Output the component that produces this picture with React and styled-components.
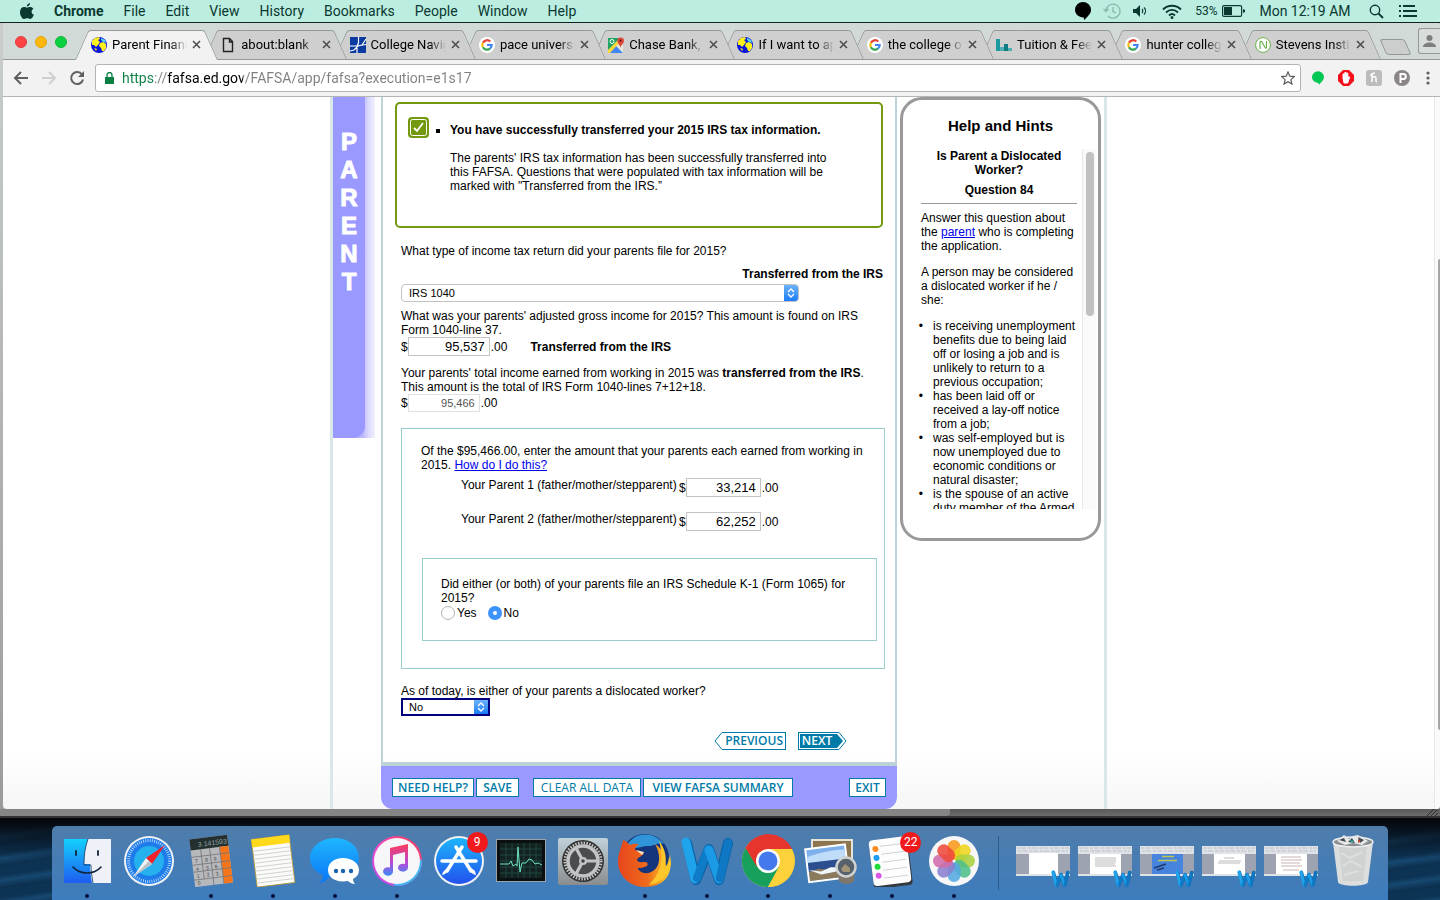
import React from "react";
import styled, { createGlobalStyle, css } from "styled-components";

const ui = `Roboto, "Liberation Sans", sans-serif`;
const body = `"Liberation Sans", Arial, sans-serif`;
const humanist = `"Open Sans", "Noto Sans", sans-serif`;
const teal = "#007ba7";
const lilac = "#9999ff";

const GlobalStyle = createGlobalStyle`
  *, *::before, *::after { box-sizing: border-box; }
  body { margin: 0; background: #0a1c30; font-family: ${body}; font-size: 12px; line-height: 14px; color: #000; }
  p, h1, h2, h3, ul { margin: 0; padding: 0; font-size: inherit; }
  button, input, select { font: inherit; color: inherit; margin: 0; }
  button { padding: 0; border: 0; background: none; }
  svg { display: block; flex: none; }
  a { color: #0000ee; }
`;

const Desktop = styled.div`
  display: flex;
  flex-direction: column;
  min-height: 100vh;
  background: linear-gradient(#060a10 0 822px, transparent 860px),
    repeating-linear-gradient(172deg, #0d3354 0 9px, #164870 14px, #0c2d4b 22px);
`;

/* ---------- system menu bar ---------- */
const MenuBar = styled.header`
  display: flex;
  align-items: center;
  height: 23px;
  padding: 0 16px 0 20px;
  background: #bbede1;
  border-bottom: 1px solid #14231f;
  font-family: ${ui};
  font-size: 14px;
  color: #0b382f;
`;
const Menus = styled.nav`
  display: flex;
  align-items: center;
  gap: 20px;
  margin-right: auto;
`;
const MenuItem = styled.button`
  font-weight: ${(p) => (p.$strong ? 700 : 400)};
  line-height: 22px;
`;
const StatusItem = styled.div`
  display: flex;
  align-items: center;
  justify-content: center;
  gap: 4px;
  width: ${(p) => p.$w}px;
  font-size: ${(p) => (p.$small ? 12 : 14)}px;
  white-space: nowrap;
`;

/* ---------- browser window ---------- */
const BackWindow = styled.div`
  display: flex;
  flex-direction: column;
  flex: 1;
  padding-left: 3px;
  background: linear-gradient(#c9cecd, #9a9a9a);
  margin-bottom: 8px;
`;
const Browser = styled.section`
  display: flex;
  flex-direction: column;
  flex: 1;
  border-radius: 5px 5px 4px 4px;
  overflow: hidden;
  background: #fff;
`;
const TabStrip = styled.div`
  display: flex;
  align-items: flex-end;
  height: 37px;
  background: #d2dad7;
  border-bottom: 1px solid #949896;
`;
const Lights = styled.div`
  display: flex;
  gap: 8px;
  width: 72px;
  flex: none;
  padding: 0 0 11px 12px;
`;
const Light = styled.button`
  width: 12px;
  height: 12px;
  border-radius: 50%;
  background: ${(p) => p.$c};
  border: 1px solid ${(p) => p.$edge};
`;
const Tabs = styled.div`
  display: flex;
  flex: 1;
  min-width: 0;
`;
const edge = css`
  content: "";
  position: absolute;
  z-index: -1;
  top: 0;
  bottom: ${(p) => (p.$active ? -1 : 0)}px;
  background: ${(p) => (p.$active ? "#f2f2f2" : "#cfcfcf")};
  border-top: 1px solid #949896;
  transform-origin: bottom;
`;
const Tab = styled.div`
  position: relative;
  z-index: ${(p) => p.$z};
  isolation: isolate;
  display: flex;
  align-items: center;
  gap: 5px;
  flex: 1 1 0;
  min-width: 0;
  height: 29px;
  padding: 0 3px 0 16px;
  font-family: ${ui};
  font-size: 13px;
  line-height: 16px;
  &::before {
    ${edge}
    left: 0;
    right: 40%;
    border-left: 1px solid #949896;
    border-top-left-radius: 3px;
    transform: skewX(-24deg);
  }
  &::after {
    ${edge}
    left: 40%;
    right: -13px;
    border-right: 1px solid #949896;
    border-top-right-radius: 3px;
    transform: skewX(24deg);
  }
`;
const TabTitle = styled.span`
  flex: 1;
  overflow: hidden;
  white-space: nowrap;
  mask-image: linear-gradient(90deg, #000 78%, transparent);
`;
const NewTab = styled.button`
  width: 25px;
  height: 16px;
  flex: none;
  margin: 0 0 4px 15px;
  border: 1px solid #949896;
  border-radius: 3px;
  background: #cbcecd;
  transform: skewX(24deg);
`;
const Person = styled.button`
  display: flex;
  justify-content: flex-end;
  align-items: center;
  width: 22px;
  height: 26px;
  flex: none;
  margin: 0 0 5px 10px;
  padding-right: 4px;
  border: 1px solid #949896;
  border-right: 0;
  border-radius: 3px 0 0 3px;
  background: #d8dddb;
`;
const Toolbar = styled.div`
  display: flex;
  align-items: center;
  height: 37px;
  padding-left: 4px;
  background: #f2f2f2;
  border-bottom: 1px solid #b5b5b5;
`;
const ToolButton = styled.button`
  display: flex;
  align-items: center;
  justify-content: center;
  width: ${(p) => (p.$last ? 24 : 28)}px;
  height: 28px;
  flex: none;
`;
const Omnibox = styled.label`
  display: flex;
  align-items: center;
  gap: 8px;
  flex: 1;
  height: 28px;
  margin: 0 3px 0 4px;
  padding: 0 5px 0 9px;
  background: #fff;
  border: 1px solid #b4b4b4;
  border-radius: 3px;
`;
const UrlInput = styled.input`
  flex: 1;
  min-width: 0;
  padding: 0;
  border: 0;
  outline: 0;
  font-family: ${ui};
  font-size: 14px;
  line-height: 20px;
  -webkit-text-fill-color: transparent;
  background: linear-gradient(90deg, #0b8043 0 32px, #808080 32px 45px, #000 45px 121px, #808080 121px);
  background-clip: text;
`;

/* ---------- page ---------- */
const Viewport = styled.div`
  display: flex;
  flex: 1;
  background: linear-gradient(transparent 92%, rgba(0, 0, 0, 0.035));
`;
const PageScroll = styled.div`
  width: 6px;
  flex: none;
  padding: 162px 0 79px 3px;
  background: #fafafa;
  border-left: 1px solid #e7e7e7;
  display: flex;
`;
const PageThumb = styled.div`
  flex: 1;
  border-radius: 3px 0 0 3px;
  background: #a6a6a6;
`;
const Frame = styled.main`
  display: flex;
  width: 777px;
  margin: 0 auto;
  border: 3px solid #d9e7e9;
  border-width: 0 3px;
`;
const StepRail = styled.aside`
  display: flex;
  width: 42px;
  height: 341px;
  flex: none;
  margin-right: 6px;
  background: linear-gradient(90deg, #b9b7fb 70%, #dcdbff 85%, #f1f0ff);
`;
const StepName = styled.h2`
  display: flex;
  flex-direction: column;
  align-items: center;
  width: 32px;
  padding-top: 31px;
  background: ${lilac};
  border-bottom-right-radius: 12px;
  font-size: 24px;
  line-height: 28px;
  font-weight: 700;
  color: #fff;
  -webkit-text-stroke: 1px #fff;
`;
const Center = styled.div`
  display: flex;
  flex-direction: column;
  width: 516px;
  flex: none;
`;
const Form = styled.form`
  flex: 1;
  display: flex;
  flex-direction: column;
  padding: 5px 12px 12px;
  border: 2px solid #bcd3d7;
  border-top: 0;
  border-bottom-width: 4px;
`;
const Notice = styled.section`
  display: flex;
  height: 126px;
  padding: 13px 40px 0 11px;
  border: 2px solid #72990f;
  border-radius: 5px;
`;
const NoticeList = styled.ul`
  flex: 1;
  padding: 6px 0 0 21px;
  list-style: square;
`;
const NoticeText = styled.p`
  margin-top: 14px;
`;
const Questions = styled.div`
  display: flex;
  flex-direction: column;
  flex: 1;
  padding: 16px 0 0 6px;
`;
const Question = styled.p`
  margin-top: ${(p) => p.$gap || 0}px;
`;
const RightNote = styled.strong`
  align-self: flex-end;
  margin: 9px 0 3px;
`;
const SelectBox = styled.div`
  display: flex;
  width: ${(p) => p.$w}px;
  height: 18px;
  background: #fff;
  border: ${(p) => (p.$focused ? "2px solid #00007f" : "1px solid #c3c3c3")};
  border-radius: ${(p) => (p.$focused ? 0 : 4)}px;
  overflow: hidden;
`;
const Select = styled.select`
  flex: 1;
  min-width: 0;
  padding: 0 0 0 ${(p) => p.$pad}px;
  border: 0;
  outline: 0;
  appearance: none;
  background: none;
  font-size: 11px;
  line-height: 14px;
`;
const Stepper = styled.span`
  display: flex;
  align-items: center;
  justify-content: center;
  width: 14px;
  background: linear-gradient(#6cb3fa, #1a7cf9);
`;
const Money = styled.div`
  display: flex;
  align-items: center;
  height: ${(p) => (p.$quiet ? 18 : 19)}px;
`;
const Amount = styled.input`
  width: ${(p) => p.$w}px;
  height: ${(p) => (p.$quiet ? 18 : 19)}px;
  margin-right: 1px;
  padding: 0 4px 0 0;
  border: 1px solid ${(p) => (p.$quiet ? "#e0e0e0" : "#c4c4c4")};
  background: #fff;
  text-align: right;
  font-size: ${(p) => (p.$quiet ? 11 : 13)}px;
  color: ${(p) => (p.$quiet ? "#545454" : "#000")};
  outline: 0;
`;
const MoneyNote = styled.strong`
  margin-left: 23px;
`;
const Panel = styled.section`
  margin: 16px -2px 0 0;
  padding: 15px 7px 27px 19px;
  border: 1px solid #99cccc;
`;
const ParentRow = styled.label`
  display: flex;
  align-items: center;
  height: 19px;
  margin: ${(p) => (p.$first ? 6 : 15)}px 0 0 40px;
`;
const ParentName = styled.span`
  align-self: flex-start;
  width: 218px;
`;
const SubPanel = styled.fieldset`
  height: 83px;
  margin: 27px 0 0 1px;
  padding: 18px 24px 0 18px;
  border: 1px solid #99cccc;
`;
const Radios = styled.div`
  display: flex;
  align-items: center;
  gap: 11px;
  height: 16px;
`;
const RadioLabel = styled.label`
  display: flex;
  align-items: center;
  gap: 2px;
`;
const Radio = styled.input`
  appearance: none;
  width: 14px;
  height: 14px;
  border-radius: 50%;
  border: 1px solid #b4b4b4;
  background: #fff;
  &:checked {
    border: 5px solid #3b93fb;
  }
`;
const Steps = styled.div`
  display: flex;
  justify-content: flex-end;
  gap: 12px;
  margin: 16px 36px 0 0;
`;
const ArrowButton = styled.button`
  display: flex;
  height: 18px;
  font-family: ${humanist};
  font-size: 12px;
  line-height: 16px;
  font-weight: 600;
  color: ${teal};
`;
const PreviousText = styled.span`
  padding: 0 2px;
  border: 1px solid ${teal};
  border-left: 0;
`;
const NextText = styled.span`
  width: 36px;
  height: 18px;
  padding: 1px 0 1px 1px;
  border: 1px solid ${teal};
  border-right: 0;
  background: ${teal} content-box;
  color: #fff;
  line-height: 14px;
`;
const Actions = styled.footer`
  display: flex;
  align-items: center;
  gap: 2px;
  height: 43px;
  padding: 0 11px;
  background: ${lilac};
  border-radius: 0 0 12px 12px;
`;
const Action = styled.button`
  width: ${(p) => p.$w}px;
  height: 19px;
  border: 1px solid ${teal};
  background: #fff;
  font-family: ${humanist};
  font-size: 12px;
  line-height: 17px;
  font-weight: ${(p) => (p.$light ? 400 : 600)};
  white-space: nowrap;
  color: ${teal};
  margin-left: ${(p) => (p.$push ? "auto" : p.$apart ? "12px" : 0)};
`;

/* ---------- help ---------- */
const Help = styled.aside`
  display: flex;
  flex-direction: column;
  width: 201px;
  height: 444px;
  margin-left: 3px;
  padding-top: 16px;
  border: 3px solid #999;
  border-radius: 22px;
`;
const HelpTitle = styled.h2`
  font-size: 15px;
  line-height: 20px;
  text-align: center;
`;
const HelpScroll = styled.div`
  display: flex;
  justify-content: space-between;
  height: 360px;
  margin: 13px 1px 0 0;
  overflow: hidden;
`;
const HelpText = styled.div`
  width: 174px;
  padding-left: 18px;
`;
const HelpHead = styled.h3`
  margin-bottom: 6px;
  text-align: center;
`;
const Rule = styled.hr`
  height: 1px;
  margin: 0 0 7px;
  border: 0;
  background: #999;
`;
const HelpPara = styled.p`
  margin-bottom: 12px;
`;
const HelpList = styled.ul`
  padding-left: 12px;
  li::marker {
    content: "•   ";
  }
`;
const HelpTrack = styled.div`
  width: 15px;
  padding: 3px;
  background: #fafafa;
  border-left: 1px solid #e8e8e8;
`;
const HelpThumb = styled.div`
  width: 8px;
  height: 164px;
  border-radius: 4px;
  background: #c1c1c1;
`;

/* ---------- window bottom edge ---------- */
const Ledge = styled.div`
  display: flex;
  height: 9px;
  margin-left: -3px;
  background: linear-gradient(#5a5a5a, #6c6c6c 7px, #333 7px);
`;
const LedgeFront = styled.div`
  width: 66%;
  height: 7px;
  margin-right: auto;
  background: #858585;
  border-bottom-right-radius: 4px;
`;

/* ---------- dock ---------- */
const Dock = styled.nav`
  display: flex;
  height: 74px;
  margin: 0 52px;
  padding: 0 4px;
  border-radius: 5px 5px 0 0;
  background: linear-gradient(#4f7dab, #3d7cbd);
`;
const DockItem = styled.button`
  position: relative;
  display: flex;
  flex-direction: column;
  align-items: center;
  flex: 1 1 0;
  min-width: 0;
  padding-top: 7px;
`;
const Running = styled.i`
  width: 4px;
  height: 4px;
  margin-top: 7px;
  border-radius: 50%;
  background: #07103a;
`;
const Badge = styled.span`
  position: absolute;
  top: 6px;
  right: 2px;
  width: 21px;
  height: 21px;
  border-radius: 50%;
  background: #f0191c;
  color: #fff;
  font-family: ${ui};
  font-size: 12px;
  line-height: 21px;
  text-align: center;
`;
const Divider = styled.i`
  width: 1px;
  margin: 10px 13px;
  background: #2a5c90;
`;

/* ---------- small drawings ---------- */
const Globe = () => (
  <svg width="16" height="16" viewBox="0 0 16 16">
    <circle cx="8" cy="8" r="8" fill="#0a14d8" />
    <path d="M1 4l3-3 4-1 1 2-2 1 2 2-2 3-2 2-2-2H1zM9 6l3-1 3 2v4l-2 3h-2l-1-3-2-2zM3 11l3 1-1 2z" fill="#fff21a" />
    <path d="M10 1l4 2 1 3-3-1-2-2z" fill="#55d4e8" />
  </svg>
);
const Blank = () => (
  <svg width="16" height="16" viewBox="0 0 16 16">
    <path d="M3.500 1.500h6l3 3v10h-9zM9.500 1.500v3.500h3" fill="none" stroke="#222" strokeWidth="1.400" />
  </svg>
);
const Navigator = () => (
  <svg width="16" height="16" viewBox="0 0 16 16">
    <path d="M0 0h16v16H0z" fill="#0b3aa0" />
    <path d="M8.500 0v6L7 9v7M0 9h7l9-1.500M0 14l4-1 4-4 4-1 4-6" fill="none" stroke="#fff" strokeWidth="1.200" />
  </svg>
);
const Google = () => (
  <svg width="16" height="16" viewBox="0 0 16 16">
    <circle cx="8" cy="8" r="8" fill="#fff" />
    <g fill="none" strokeWidth="2.200">
      <path d="M11.300 4.500A4.700 4.700 0 0 0 3.900 5.800" stroke="#ea4335" />
      <path d="M3.900 5.700A4.700 4.700 0 0 0 3.900 10.300" stroke="#fbbc05" />
      <path d="M3.900 10.200A4.700 4.700 0 0 0 11 11.600" stroke="#34a853" />
      <path d="M11 11.600A4.700 4.700 0 0 0 12.700 8H8" stroke="#4285f4" />
    </g>
  </svg>
);
const Maps = () => (
  <svg width="16" height="16" viewBox="0 0 16 16">
    <path d="M0 1h12L0 14z" fill="#1fa463" />
    <path d="M0 14L11 3l4 4v9H1z" fill="#e9e6dc" />
    <path d="M1 16l7-7 7 7z" fill="#4285f4" />
    <path d="M0 13l11-11 2 2L2 16H0z" fill="#fdd73c" />
    <circle cx="4" cy="4.500" r="2" fill="none" stroke="#fff" />
    <path d="M12.500 11c0-3-3.200-4-3.200-7.200a3.300 3.300 0 0 1 6.700 0c0 3.200-3.200 4.200-3.500 7.200z" fill="#dd4b3e" />
    <circle cx="12.600" cy="3.800" r="1.200" fill="#7d1c14" />
  </svg>
);
const Bars = () => (
  <svg width="16" height="16" viewBox="0 0 16 16">
    <path d="M0 2h4v12H0z" fill="#1b9aa0" />
    <path d="M4 10h4v4H4zM12 11h4v3h-4z" fill="#4fb0b4" />
    <path d="M8 7h4v7H8z" fill="#0c7c80" />
  </svg>
);
const Neighbour = () => (
  <svg width="16" height="16" viewBox="0 0 16 16">
    <circle cx="8" cy="8" r="7.400" fill="#fff" stroke="#6ab04a" />
    <path d="M5 12V5.500C5 4 6.300 4 7 5l3 5.500c.6 1 1.500.8 1.500-.5V4" fill="none" stroke="#6ab04a" strokeWidth="1.200" />
  </svg>
);
const Close = () => (
  <svg width="9" height="9" viewBox="0 0 9 9">
    <path d="M1 1l7 7M8 1L1 8" stroke="#4a4a4a" strokeWidth="1.500" />
  </svg>
);
const Blob = ({ c, s }) => (
  <svg width={s} height={s + 2} viewBox="0 0 16 18">
    <path d="M8 0a8 7.800 0 0 1 8 7.800c0 4-3 6-6.500 10.200l-1-2.500C3.500 15.500 0 12 0 7.800A8 7.800 0 0 1 8 0z" fill={c} />
  </svg>
);
const Arrow = ({ flip, c }) => (
  <svg width="16" height="16" viewBox="0 0 16 16">
    <path d={flip ? "M1 8h13M8 2l6 6-6 6" : "M15 8H2M8 2L2 8l6 6"} fill="none" stroke={c} strokeWidth="2" />
  </svg>
);
const Chevrons = () => (
  <svg width="8" height="10" viewBox="0 0 8 10">
    <path d="M1 4l3-3 3 3M1 6l3 3 3-3" fill="none" stroke="#fff" strokeWidth="1.300" />
  </svg>
);
const Drawing = ({ children, w = 54 }) => (
  <svg width={w} height="54" viewBox="0 0 54 54">
    {children}
  </svg>
);

const Finder = () => (
  <Drawing>
    <defs>
      <linearGradient id="fa" x2="0" y2="1"><stop stopColor="#14d0fe" /><stop offset="1" stopColor="#1d5ef0" /></linearGradient>
    </defs>
    <path d="M4 6h47v44H4z" fill="#eef2f8" />
    <path d="M4 6h24c-3 8-4 16-4 25h6c0 7 1 13 2 19H4z" fill="url(#fa)" />
    <path d="M28 6c-3 8-4 16-4 26h7c0 6 1 12 2 18" fill="none" stroke="#12335c" strokeWidth=".8" />
    <path d="M16 18v4M38 18v4" stroke="#12233a" strokeWidth="1.800" strokeLinecap="round" />
    <path d="M13 34c7 8 21 8 28 0" fill="none" stroke="#12233a" strokeWidth="1.600" strokeLinecap="round" />
  </Drawing>
);
const Safari = () => (
  <Drawing>
    <circle cx="27" cy="28" r="25" fill="#f1f3f5" />
    <circle cx="27" cy="28" r="23" fill="#1e7bea" />
    <circle cx="27" cy="28" r="15" fill="#25b1ee" />
    <circle cx="27" cy="28" r="20.500" fill="none" stroke="#d8ecff" strokeWidth="3" strokeDasharray=".7 1.500" />
    <path d="M43 12L30 31l-6-6z" fill="#f2222a" />
    <path d="M11 44l13-19 6 6z" fill="#f3f3f3" />
    <path d="M11 44l19-13-3-3z" fill="#b9bfc6" />
  </Drawing>
);
const Calculator = () => (
  <Drawing>
    <g transform="rotate(-7 27 27)">
      <path d="M8 4h38v48H8z" fill="#b6b8bb" />
      <path d="M8 4h38v11H8z" fill="#24302f" />
      <path d="M37 15h9v37h-9z" fill="#f5761a" />
      <path d="M8 22h38M8 30h38M8 37h38M8 45h38M18 15v30M27 15v37M37 15v37" stroke="#74767a" strokeWidth=".8" />
      <text x="45" y="12.500" textAnchor="end" fontFamily="Liberation Sans" fontSize="7" fill="#93a5a4">3.141593</text>
      <g fontFamily="Liberation Sans" fontSize="5" fill="#444">
        <text x="11" y="28">7</text><text x="21" y="28">8</text><text x="30" y="28">9</text>
        <text x="11" y="36">4</text><text x="21" y="36">5</text><text x="30" y="36">6</text>
        <text x="11" y="43">1</text><text x="21" y="43">2</text><text x="30" y="43">3</text>
        <text x="11" y="50">0</text>
      </g>
    </g>
  </Drawing>
);
const Notes = () => (
  <Drawing>
    <g transform="rotate(-7 27 27)">
      <path d="M8 4h38v48H8z" fill="#fbfbf9" stroke="#b8962c" strokeWidth=".8" />
      <path d="M8 4h38v8H8z" fill="#ffd91c" />
      <path d="M8 16h38M8 20h38M8 24h38M8 28h38M8 32h38M8 36h38M8 40h38M8 44h38M8 48h38" stroke="#c9c9c9" strokeWidth=".8" />
    </g>
  </Drawing>
);
const Messages = () => (
  <Drawing>
    <defs>
      <linearGradient id="ms" x2="0" y2="1"><stop stopColor="#1fb6ff" /><stop offset="1" stopColor="#0a76f5" /></linearGradient>
    </defs>
    <path d="M27 5c14 0 24 9 24 20S41 45 27 45c-2 0-4 0-6-1-3 4-7 6-10 6 3-3 4-5 4-8C7 39 2 33 2 25 2 14 13 5 27 5z" fill="url(#ms)" />
    <path d="M35 25c9 0 16 5 16 12 0 4-2 7-6 9 0 2 1 4 2 5-3 0-5-1-7-3-12 2-20-3-20-11 0-7 6-12 15-12z" fill="#fff" />
    <g fill="#1a62ae"><circle cx="28" cy="38" r="2.200" /><circle cx="35" cy="38" r="2.200" /><circle cx="43" cy="38" r="2.200" /></g>
  </Drawing>
);
const Music = () => (
  <Drawing>
    <defs>
      <linearGradient id="it" x1="1" x2="0" y2="1"><stop stopColor="#fb3a4a" /><stop offset=".6" stopColor="#f04ad0" /><stop offset="1" stopColor="#b04af0" /></linearGradient>
      <linearGradient id="nt" x2="0" y2="1"><stop stopColor="#fb3b57" /><stop offset=".6" stopColor="#b54bd8" /><stop offset="1" stopColor="#3b8cf6" /></linearGradient>
    </defs>
    <circle cx="27" cy="28" r="25" fill="url(#it)" />
    <path d="M52 28A25 25 0 0 1 27 53l-4-1 27-26z" fill="#3fb8f4" />
    <circle cx="27" cy="28" r="23" fill="#f7f7fa" />
    <path d="M20 15l18-4v24a5 4 0 1 1-3-4V19l-12 3v17a5 4.300 0 1 1-3-4.500z" fill="url(#nt)" />
  </Drawing>
);
const Store = () => (
  <Drawing>
    <defs>
      <linearGradient id="st" x2="0" y2="1"><stop stopColor="#1cb4fb" /><stop offset="1" stopColor="#2352ee" /></linearGradient>
    </defs>
    <circle cx="27" cy="28" r="25" fill="#f1f3f5" />
    <circle cx="27" cy="28" r="23" fill="url(#st)" />
    <g stroke="#fff" strokeWidth="3.500" strokeLinecap="round">
      <path d="M10 28h34" /><path d="M30 14L15 38" /><path d="M24 14l15 24" />
    </g>
    <path d="M16 34l-5 5-1 3 3-1 5-5zM38 34l5 4 1 4-3-1-5-5z" fill="#fff" />
  </Drawing>
);
const Activity = () => (
  <Drawing>
    <path d="M2 6h50v43H2z" fill="#9aa3a8" />
    <path d="M3 7h48v41H3z" fill="#0b0f10" />
    <path d="M6 10h42v35H6z" fill="#122322" />
    <path d="M12 10v35M18 10v35M24 10v35M30 10v35M36 10v35M42 10v35M6 16h42M6 22h42M6 28h42M6 34h42M6 40h42" stroke="#27534c" strokeWidth=".7" />
    <path d="M6 31h9l2-3 2 5 3-2 1 2 1-19 2 25 2-9h4l3-4 3 1 3 4 3-1 4 2" fill="none" stroke="#6fe3c4" />
  </Drawing>
);
const Settings = () => (
  <Drawing>
    <defs>
      <linearGradient id="sp" x2="0" y2="1"><stop stopColor="#bfd1da" /><stop offset="1" stopColor="#8a8d8e" /></linearGradient>
    </defs>
    <rect x="2" y="5" width="50" height="47" rx="2" fill="url(#sp)" />
    <circle cx="27" cy="28" r="21" fill="#333" />
    <circle cx="27" cy="28" r="18" fill="none" stroke="#c2c4c5" strokeWidth="3" strokeDasharray="1.500 1.330" />
    <circle cx="27" cy="28" r="15" fill="#4a4c4d" stroke="#c2c4c5" strokeWidth="3.500" />
    <path d="M27 28h15M27 28L20 15M27 28l-7 13" stroke="#c2c4c5" strokeWidth="3.200" />
    <circle cx="27" cy="28" r="4" fill="#c2c4c5" /><circle cx="27" cy="28" r="1.800" fill="#444" />
  </Drawing>
);
const Firefox = () => (
  <Drawing>
    <defs>
      <linearGradient id="ff" x2="1"><stop stopColor="#e8451c" /><stop offset=".55" stopColor="#ee6a1a" /><stop offset="1" stopColor="#fdd22c" /></linearGradient>
    </defs>
    <circle cx="27" cy="25" r="24" fill="#14357c" />
    <path d="M8 13C17-2 36-2 46 11c-6-3-10 3-18 2-6 1-12 4-20 0z" fill="#2f95d8" />
    <path d="M5 7c3 1 5 3 7 5 4-2 7-1 9-1-3 2-4 4-4 6l9 3c-2 4-7 4-7 7 1 3 5 2 8 2 3 0 3 3 2 4-4 2-10 3-10 1 2 5 8 8 14 5 10-4 10-18 4-28 10 6 10 16 11 22 2-2 3-7 3-10 5 16-3 31-24 31C11 54 0 42 0 29 0 19 4 14 5 7z" fill="url(#ff)" />
    <path d="M41 8c6 7 9 18 5 28 4-3 6-8 6-15l1 10c-2 11-10 19-22 21 8-9 17-20 10-44z" fill="#fbc72b" />
    <path d="M18 17l8 2-2 3z" fill="#fbe3c0" />
  </Drawing>
);
const WordStrokes = () => (
  <g fill="none" strokeLinecap="round" strokeLinejoin="round">
    <path d="M7 10l9 37 13-31 10 31 9-37" stroke="#0b64a8" strokeWidth="10" />
    <path d="M6 9l9 37" stroke="#1fa4ec" strokeWidth="9" />
    <path d="M17 45l11-29" stroke="#0f7cc9" strokeWidth="8" />
    <path d="M29 17l10 29" stroke="#1b9ae6" strokeWidth="9" />
    <path d="M40 45l8-35" stroke="#0e78c4" strokeWidth="8" />
  </g>
);
const Word = () => (<Drawing><WordStrokes /></Drawing>);
const Chrome = () => (
  <Drawing>
    <circle cx="27" cy="28" r="26" fill="#fdd13a" />
    <path d="M4.500 15A26 26 0 0 0 27 54l11-20-11-6-11-1z" fill="#17a05c" />
    <path d="M4.500 15A26 26 0 0 1 51 16H27L16 34z" fill="#e5352d" />
    <path d="M51 16a26 26 0 0 1-24 38l11-20V16z" fill="#fdd13a" />
    <circle cx="27" cy="28" r="12" fill="#fff" /><circle cx="27" cy="28" r="9.500" fill="#4479ee" />
  </Drawing>
);
const Preview = () => (
  <Drawing>
    <path d="M8 6h42v36H8z" fill="#e9e4d8" /><path d="M10 8h38v30H10z" fill="#8d7550" />
    <g transform="rotate(-7 22 30)">
      <path d="M3 13h42v35H3z" fill="#fff" /><path d="M5 15h38v31H5z" fill="#7fb0ee" />
      <path d="M5 22c12-3 24-4 38-3v9H5z" fill="#bfdcf8" /><path d="M5 28h38v9H5z" fill="#2b4f8e" />
      <path d="M5 37l10-2 12 3 16-4v12H5z" fill="#8c7a5c" /><path d="M5 35l12 3 10-3 16 2-12 3-14 1z" fill="#eef6fb" />
    </g>
    <path d="M34 36h18l-1 12c-3 4-12 4-15 0z" fill="#7f776b" />
    <circle cx="43" cy="34" r="9.500" fill="#56616b" stroke="#d0d2d2" strokeWidth="2.500" /><path d="M38 36l4-5 5 4v4h-7z" fill="#a39273" />
  </Drawing>
);
const Reminders = () => (
  <Drawing>
    <g transform="rotate(-7 27 28)">
      <rect x="6" y="7" width="39" height="47" rx="4" fill="#353a40" />
      <rect x="6" y="5" width="38" height="46" rx="4" fill="#fdfdfd" />
      <path d="M17 12h24M17 20h24M17 28h24M17 36h24M17 44h24" stroke="#d2d2d2" />
      <circle cx="12" cy="14" r="3" fill="#fb8b1e" /><circle cx="12" cy="23" r="3" fill="#1e9cf3" />
      <circle cx="12" cy="32" r="3" fill="#1edb3d" /><circle cx="12" cy="41" r="3" fill="#d957e4" />
    </g>
  </Drawing>
);
const Photos = () => (
  <Drawing>
    <circle cx="27" cy="28" r="25" fill="#f7f7f8" />
    {["#fb9a1c", "#efd51c", "#a8d23c", "#4cbf8a", "#55a8e0", "#8a7fd0", "#d06ca8", "#ee4a3a"].map((c, i) => (
      <rect key={c} x="20.500" y="7" width="13" height="20" rx="6.500" fill={c} fillOpacity=".88" transform={`rotate(${i * 45} 27 28)`} />
    ))}
    <circle cx="27" cy="28" r="1.500" fill="#fff" />
  </Drawing>
);
const MiniWindow = ({ kind }) => (
  <svg width="54" height="54" viewBox="0 0 54 54">
    <path d="M0 13h54v30H0z" fill="#dfe3e8" /><path d="M0 21h54v20H0z" fill="#9ea3b2" />
    <path d="M1 15h52M2 18h50" stroke="#b4b9c0" strokeDasharray="3 1 5 2" strokeWidth=".8" />
    <path d={kind === 0 ? "M13 20h29v21H13z" : "M12 21h31v20H12z"} fill={kind === 2 ? "#4684de" : "#fff"} />
    {kind === 1 && <path d="M17 25h21M17 27h21M17 29h21M17 31h20M17 33h21" stroke="#bbb" />}
    {kind === 2 && <path d="M22 23.500h12M18 27.500h19" stroke="#c3c648" strokeWidth="1.500" />}
    {kind === 2 && <path d="M14 35l12-4M17 37l7-2" stroke="#20386c" strokeWidth="1.500" />}
    {kind === 3 && <path d="M22 25h10M17 28h22M16 30h22" stroke="#bbb" />}
    {kind === 4 && <path d="M17 24h20M17 27h21M17 30h19M17 33h21M19 37h16" stroke="#c9b4b4" />}
    <g transform="translate(35 36) scale(.35)"><WordStrokes /></g>
  </svg>
);
const Trash = () => (
  <Drawing>
    <path d="M7 9h40l-5 40c-1 5-29 5-30 0z" fill="#dcdddd" />
    <path d="M13 14h28l-4 34H17z" fill="#d0d1d1" />
    <ellipse cx="27" cy="9" rx="20" ry="5" fill="#8b8f92" stroke="#eceeef" strokeWidth="1.500" />
    <path d="M11 8l7-6 5 4 4-3 5-1 10 6-6 4-9-2-8 2z" fill="#e8e8e8" />
    <path d="M13 7l5-2 2 4zM22 9l4-4 3 5zM32 4l6 3-4 3z" fill="#3e4a52" /><path d="M24 7l4 1-2 2z" fill="#2bb6a8" /><path d="M32 6l3 2-3 2z" fill="#c2402c" />
    <path d="M15 20l9 5 12-6M17 33l8-5 11 6M18 42l14-4" fill="none" stroke="#dddede" strokeWidth="2" />
  </Drawing>
);

const tabs = [
  ["Parent Financial Information", Globe],
  ["about:blank", Blank],
  ["College Navigator - National", Navigator],
  ["pace university - Google", Google],
  ["Chase Bank, New York", Maps],
  ["If I want to apply for aid", Globe],
  ["the college of new jersey", Google],
  ["Tuition & Fees | Lehman", Bars],
  ["hunter college - Google", Google],
  ["Stevens Institute of Tech", Neighbour],
];
const dock = [
  ["Finder", Finder, true],
  ["Safari", Safari, false],
  ["Calculator", Calculator, true],
  ["Notes", Notes, true],
  ["Messages", Messages, true],
  ["iTunes", Music, true],
  ["App Store", Store, false, 9],
  ["Activity Monitor", Activity, false],
  ["System Preferences", Settings, false],
  ["Firefox", Firefox, true],
  ["Word", Word, true],
  ["Chrome", Chrome, true],
  ["Preview", Preview, true],
  ["Reminders", Reminders, true, 22],
  ["Photos", Photos, true],
];

const TopBar = () => (
  <MenuBar>
    <Menus>
      <svg width="14" height="16" viewBox="0 0 14 16" fill="#0b382f">
        <path d="M10 0c0 2-1.500 3.500-3.200 3.600C6.700 1.800 8.200.2 10 0zM7 4.700C7.800 4.700 8.800 4 10.200 4c1.200 0 2.400.6 3.200 1.700-2.600 1.500-2.200 5 .5 6.100C13 14 11.700 16 10.200 16c-1.100 0-1.600-.7-3-.7s-2 .7-3 .7C2.200 16 0 12.400 0 9.200 0 6 2 4.100 4.100 4.100 5.400 4.100 6.300 4.700 7 4.700z" />
      </svg>
      {["Chrome", "File", "Edit", "View", "History", "Bookmarks", "People", "Window", "Help"].map((m, i) => (
        <MenuItem key={m} $strong={i === 0}>{m}</MenuItem>
      ))}
    </Menus>
    <StatusItem $w={28}><Blob c="#000" s={16} /></StatusItem>
    <StatusItem $w={30}>
      <svg width="18" height="16" viewBox="0 0 18 16" fill="none" stroke="#86b8ab" strokeWidth="1.300">
        <path d="M3 8a7 7 0 1 1 2 5M.5 6L3 8.500 5.500 6M10 4v4.500l3 1.500" />
      </svg>
    </StatusItem>
    <StatusItem $w={26}>
      <svg width="14" height="12" viewBox="0 0 14 12">
        <path d="M0 4h3l4-4v12L3 8H0z" fill="#0b382f" />
        <path d="M9 4c1 1 1 3 0 4M11 2.500c2 2 2 5 0 7" fill="none" stroke="#0b382f" strokeWidth="1.200" />
      </svg>
    </StatusItem>
    <StatusItem $w={38}>
      <svg width="20" height="15" viewBox="0 0 20 15" fill="none" stroke="#0b382f" strokeWidth="1.800">
        <path d="M1 5.500c5-5 13-5 18 0M4 8.500c3.500-3.500 8.500-3.500 12 0M7 11.500c2-2 4-2 6 0" />
        <circle cx="10" cy="13.500" r=".6" />
      </svg>
    </StatusItem>
    <StatusItem $w={58} $small>
      53%
      <svg width="23" height="12" viewBox="0 0 23 12">
        <rect x=".6" y=".6" width="19" height="10.800" rx="1.500" fill="none" stroke="#0b382f" strokeWidth="1.200" />
        <path d="M2 2h8v8H2zM21 4l2 1v2l-2 1z" fill="#0b382f" />
      </svg>
    </StatusItem>
    <StatusItem $w={112}>Mon 12:19 AM</StatusItem>
    <StatusItem $w={31}>
      <svg width="15" height="15" viewBox="0 0 15 15" fill="none" stroke="#0b382f" strokeWidth="1.400">
        <circle cx="6" cy="6" r="4.700" /><path d="M9.500 9.500L14 14" strokeWidth="1.800" />
      </svg>
    </StatusItem>
    <StatusItem $w={32}>
      <svg width="18" height="12" viewBox="0 0 18 12" stroke="#0b382f" strokeWidth="1.800">
        <path d="M0 1h2M4 1h12M0 6h2M4 6h14M0 11h2M4 11h14" />
      </svg>
    </StatusItem>
  </MenuBar>
);

const BrowserChrome = () => (
  <>
    <TabStrip>
      <Lights>
        <Light $c="#fc4444" $edge="#e23a3c" aria-label="Close window" />
        <Light $c="#fdb80b" $edge="#e3a40a" aria-label="Minimise" />
        <Light $c="#0bd03f" $edge="#0db534" aria-label="Zoom" />
      </Lights>
      <Tabs>
        {tabs.map(([title, Icon], i) => (
          <Tab key={title} $active={i === 0} $z={tabs.length - i}>
            <Icon />
            <TabTitle>{title}</TabTitle>
            <Close />
          </Tab>
        ))}
      </Tabs>
      <NewTab aria-label="New tab" />
      <Person aria-label="People">
        <svg width="13" height="12" viewBox="0 0 13 12" fill="#7c7f7e">
          <circle cx="6.500" cy="3" r="3" /><path d="M0 12c0-6 13-6 13 0z" />
        </svg>
      </Person>
    </TabStrip>
    <Toolbar>
      <ToolButton aria-label="Back"><Arrow c="#606060" /></ToolButton>
      <ToolButton aria-label="Forward"><Arrow flip c="#cfcfcf" /></ToolButton>
      <ToolButton aria-label="Reload">
        <svg width="16" height="16" viewBox="0 0 16 16">
          <path d="M13 4.500A6 6 0 1 0 14 9.500" fill="none" stroke="#606060" strokeWidth="2" />
          <path d="M15 1v6H9z" fill="#606060" />
        </svg>
      </ToolButton>
      <Omnibox>
        <svg width="9" height="12" viewBox="0 0 9 12">
          <path d="M0 5h9v7H0z" fill="#0b8043" /><path d="M2 5V3a2.500 2.500 0 0 1 5 0v2" fill="none" stroke="#0b8043" strokeWidth="1.300" />
        </svg>
        <UrlInput aria-label="Address" defaultValue="https://fafsa.ed.gov/FAFSA/app/fafsa?execution=e1s17" />
        <svg width="14" height="14" viewBox="0 0 14 14">
          <path d="M7 1l1.800 4.200 4.500.4-3.400 3 1 4.400L7 10.700 3.100 13l1-4.400-3.400-3 4.500-.4z" fill="none" stroke="#5a5a5a" strokeWidth="1.200" />
        </svg>
      </Omnibox>
      <ToolButton aria-label="Hangouts"><Blob c="#00c853" s={12} /></ToolButton>
      <ToolButton aria-label="Ad blocker">
        <svg width="16" height="16" viewBox="0 0 16 16">
          <path d="M5 0h6l5 5v6l-5 5H5l-5-5V5z" fill="#f4101a" />
          <path d="M5 8V4h1.200v3h.6V2.500H8V7h.6V3h1.200v5l1.200-1.500.6 1-2 5.500H6z" fill="#fff" stroke="#fff" />
        </svg>
      </ToolButton>
      <ToolButton aria-label="Honey">
        <svg width="16" height="16" viewBox="0 0 16 16">
          <rect width="16" height="16" rx="3" fill="#bcbcbc" />
          <path d="M6 3v9M6 8c2-2.500 4-1.500 4 .5S9.500 12 11 12M4 5c2 0 3-2 5-2" fill="none" stroke="#fff" strokeWidth="1.500" />
        </svg>
      </ToolButton>
      <ToolButton aria-label="Pinterest">
        <svg width="16" height="16" viewBox="0 0 16 16">
          <circle cx="8" cy="8" r="8" fill="#8b8587" />
          <path d="M6.500 13V4h2.800a2.500 2.500 0 0 1 0 5H6.500" fill="none" stroke="#fff" strokeWidth="2" />
        </svg>
      </ToolButton>
      <ToolButton $last aria-label="Menu">
        <svg width="4" height="14" viewBox="0 0 4 14" fill="#606060">
          <circle cx="2" cy="2" r="1.600" /><circle cx="2" cy="7" r="1.600" /><circle cx="2" cy="12" r="1.600" />
        </svg>
      </ToolButton>
    </Toolbar>
  </>
);

const TaxForm = () => (
  <Form onSubmit={(e) => e.preventDefault()}>
    <Notice>
      <svg width="21" height="21" viewBox="0 0 21 21">
        <rect width="21" height="21" rx="4" fill="#72990f" />
        <rect x="2.500" y="2.500" width="16" height="16" rx="2" fill="none" stroke="#fff" />
        <path d="M6 11l3 3 6-8" fill="none" stroke="#fff" strokeWidth="1.800" />
      </svg>
      <NoticeList>
        <li>
          <strong>You have successfully transferred your 2015 IRS tax information.</strong>
          <NoticeText>
            The parents' IRS tax information has been successfully transferred into this FAFSA. Questions that were
            populated with tax information will be marked with "Transferred from the IRS.”
          </NoticeText>
        </li>
      </NoticeList>
    </Notice>
    <Questions>
      <label htmlFor="return-type">What type of income tax return did your parents file for 2015?</label>
      <RightNote>Transferred from the IRS</RightNote>
      <SelectBox $w={398}>
        <Select id="return-type" $pad={7}><option>IRS 1040</option></Select>
        <Stepper><Chevrons /></Stepper>
      </SelectBox>
      <Question $gap={7}>
        <label htmlFor="agi">
          What was your parents' adjusted gross income for 2015? This amount is found on IRS Form 1040-line 37.
        </label>
      </Question>
      <Money>
        $<Amount id="agi" $w={82} defaultValue="95,537" />.00
        <MoneyNote>Transferred from the IRS</MoneyNote>
      </Money>
      <Question $gap={10}>
        <label htmlFor="earned">
          Your parents' total income earned from working in 2015 was <strong>transferred from the IRS</strong>. This
          amount is the total of IRS Form 1040-lines 7+12+18.
        </label>
      </Question>
      <Money $quiet>
        $<Amount id="earned" $w={72} $quiet readOnly defaultValue="95,466" />.00
      </Money>
      <Panel>
        <p>
          Of the $95,466.00, enter the amount that your parents each earned from working in 2015.{" "}
          <a href="#how">How do I do this?</a>
        </p>
        <ParentRow $first>
          <ParentName>Your Parent 1 (father/mother/stepparent)</ParentName>
          $<Amount $w={75} defaultValue="33,214" />.00
        </ParentRow>
        <ParentRow>
          <ParentName>Your Parent 2 (father/mother/stepparent)</ParentName>
          $<Amount $w={75} defaultValue="62,252" />.00
        </ParentRow>
        <SubPanel>
          <p>Did either (or both) of your parents file an IRS Schedule K-1 (Form 1065) for 2015?</p>
          <Radios>
            <RadioLabel><Radio type="radio" name="k1" />Yes</RadioLabel>
            <RadioLabel><Radio type="radio" name="k1" defaultChecked />No</RadioLabel>
          </Radios>
        </SubPanel>
      </Panel>
      <Question $gap={15}>
        <label htmlFor="dislocated">As of today, is either of your parents a dislocated worker?</label>
      </Question>
      <SelectBox $w={89} $focused>
        <Select id="dislocated" $pad={6}><option>No</option></Select>
        <Stepper><Chevrons /></Stepper>
      </SelectBox>
      <Steps>
        <ArrowButton type="button">
          <svg width="9" height="18" viewBox="0 0 9 18" fill="none" stroke={teal}>
            <path d="M9 .5H8L1 9l7 8.500h1" />
          </svg>
          <PreviousText>PREVIOUS</PreviousText>
        </ArrowButton>
        <ArrowButton type="submit">
          <NextText>NEXT</NextText>
          <svg width="13" height="18" viewBox="0 0 13 18">
            <path d="M0 2h3l6 7-6 7H0z" fill={teal} /><path d="M0 .5h5l7 8.500-7 8.500H0" fill="none" stroke={teal} />
          </svg>
        </ArrowButton>
      </Steps>
    </Questions>
  </Form>
);

const HelpPanel = () => (
  <Help>
    <HelpTitle>Help and Hints</HelpTitle>
    <HelpScroll>
      <HelpText>
        <HelpHead>Is Parent a Dislocated Worker?</HelpHead>
        <HelpHead>Question 84</HelpHead>
        <Rule />
        <HelpPara>
          Answer this question about the <a href="#parent">parent</a> who is completing the application.
        </HelpPara>
        <HelpPara>A person may be considered a dislocated worker if he / she:</HelpPara>
        <HelpList>
          <li>is receiving unemployment benefits due to being laid off or losing a job and is unlikely to return to a previous occupation;</li>
          <li>has been laid off or received a lay-off notice from a job;</li>
          <li>was self-employed but is now unemployed due to economic conditions or natural disaster;</li>
          <li>is the spouse of an active duty member of the Armed</li>
        </HelpList>
      </HelpText>
      <HelpTrack><HelpThumb /></HelpTrack>
    </HelpScroll>
  </Help>
);

export default function App() {
  return (
    <Desktop>
      <GlobalStyle />
      <TopBar />
      <BackWindow>
        <Browser>
          <BrowserChrome />
          <Viewport>
            <Frame>
              <StepRail>
                <StepName>
                  {"PARENT".split("").map((c) => <span key={c}>{c}</span>)}
                </StepName>
              </StepRail>
              <Center>
                <TaxForm />
                <Actions>
                  <Action $w={82}>NEED HELP?</Action>
                  <Action $w={43}>SAVE</Action>
                  <Action $w={108} $apart $light>CLEAR ALL DATA</Action>
                  <Action $w={150}>VIEW FAFSA SUMMARY</Action>
                  <Action $w={37} $push>EXIT</Action>
                </Actions>
              </Center>
              <HelpPanel />
            </Frame>
            <PageScroll><PageThumb /></PageScroll>
          </Viewport>
        </Browser>
        <Ledge>
          <LedgeFront />
          <svg width="14" height="8" viewBox="0 0 14 8" stroke="#2c2c2c">
            <path d="M0 8l8-8M4 8l7-7M8 8l4-4" />
          </svg>
        </Ledge>
      </BackWindow>
      <Dock>
        {dock.map(([name, Icon, running, count]) => (
          <DockItem key={name} aria-label={name}>
            <Icon />
            {running && <Running />}
            {count && <Badge>{count}</Badge>}
          </DockItem>
        ))}
        <Divider />
        {[0, 1, 2, 3, 4].map((k) => (
          <DockItem key={k} aria-label="Minimised document"><MiniWindow kind={k} /></DockItem>
        ))}
        <DockItem aria-label="Trash"><Trash /></DockItem>
      </Dock>
    </Desktop>
  );
}
